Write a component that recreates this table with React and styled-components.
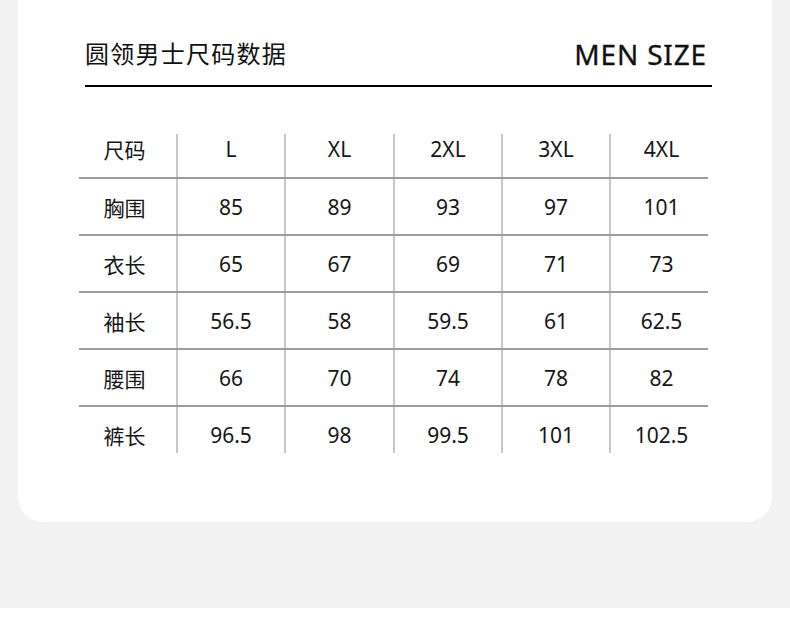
import React from 'react';
import styled, { createGlobalStyle } from 'styled-components';

const GlobalStyle = createGlobalStyle`
  html, body {
    margin: 0;
    padding: 0;
    background: #ffffff;
  }
  body {
    font-family: "Noto Sans", "Noto Sans CJK SC", sans-serif;
    color: #111111;
  }
`;

const Page = styled.div`
  width: 790px;
  height: 608px;
  padding: 0 18px;
  box-sizing: border-box;
  background: #f2f2f2;
`;

const Card = styled.div`
  height: 522px;
  background: #ffffff;
  border-radius: 0 0 25px 25px;
  padding-top: 1px;
  box-sizing: border-box;
`;

const Header = styled.div`
  display: flex;
  justify-content: space-between;
  align-items: center;
  height: 63px;
  margin: 0 60px 0 67px;
  padding-top: 21px;
  border-bottom: 2px solid #000000;
`;

const Title = styled.h1`
  margin: 0;
  font-family: "Noto Sans CJK SC", sans-serif;
  font-size: 24px;
  font-weight: 400;
  letter-spacing: 1.25px;
  line-height: 1;
  color: #111111;
  transform: translateY(-1px);
`;

const EnTitle = styled.span`
  margin-right: 5px;
  font-family: "Noto Sans", sans-serif;
  font-size: 28px;
  font-weight: 400;
  letter-spacing: 0.85px;
  line-height: 1;
  color: #111111;
  -webkit-text-stroke: 0.3px #111111;
`;

const Table = styled.div`
  width: 629px;
  margin: 35px 0 0 61px;
`;

const Row = styled.div`
  display: grid;
  grid-template-columns: 97px 108px 109px 108px 108px 99px;
  height: 57px;
  box-sizing: border-box;
  border-bottom: ${p => (p.$last ? 'none' : '2px solid #9c9c9c')};
`;

const Cell = styled.div`
  display: flex;
  align-items: center;
  justify-content: center;
  box-sizing: border-box;
  font-size: 21px;
  color: #161616;
  border-left: ${p => (p.$label ? 'none' : '2px solid #c9c9c9')};
  margin-top: ${p => (p.$top ? '12px' : '0')};
  margin-bottom: ${p => (p.$bottom ? '11px' : '0')};
  padding-bottom: ${p => (p.$top ? '13px' : '0')};
  padding-top: ${p => (p.$bottom ? '10px' : '0')};
  padding-right: ${p => (p.$label ? '6px' : '0')};
  padding-left: ${p => (p.$end ? '4px' : '0')};
`;

const rows = [
  ['尺码', 'L', 'XL', '2XL', '3XL', '4XL'],
  ['胸围', '85', '89', '93', '97', '101'],
  ['衣长', '65', '67', '69', '71', '73'],
  ['袖长', '56.5', '58', '59.5', '61', '62.5'],
  ['腰围', '66', '70', '74', '78', '82'],
  ['裤长', '96.5', '98', '99.5', '101', '102.5']
];

export default function App() {
  return (
    <>
      <GlobalStyle />
      <Page>
        <Card>
          <Header>
            <Title>圆领男士尺码数据</Title>
            <EnTitle>MEN SIZE</EnTitle>
          </Header>
          <Table>
            {rows.map((row, r) => {
              const top = r === 0;
              const bottom = r === rows.length - 1;
              return (
                <Row key={row[0]} $last={bottom}>
                  {row.map((value, c) => (
                    <Cell
                      key={c}
                      $label={c === 0}
                      $end={c === row.length - 1}
                      $top={top}
                      $bottom={bottom}
                    >
                      {value}
                    </Cell>
                  ))}
                </Row>
              );
            })}
          </Table>
        </Card>
      </Page>
    </>
  );
}
